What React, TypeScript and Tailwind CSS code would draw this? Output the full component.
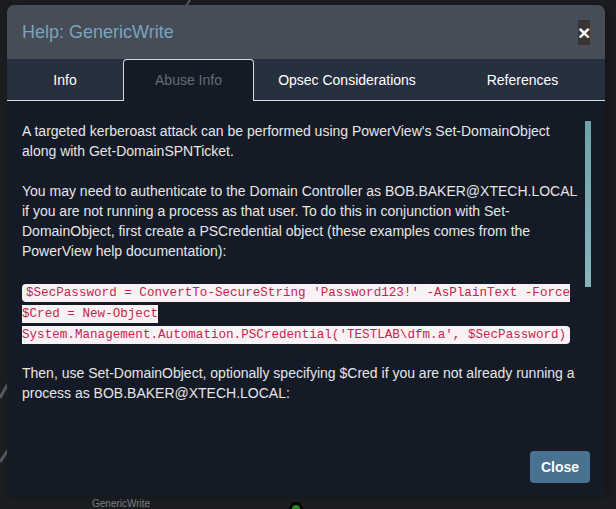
const tabs = [
  { label: "Info", width: "w-[116px]" },
  { label: "Abuse Info", width: "w-[131px]", active: true },
  { label: "Opsec Considerations", width: "w-[186px]" },
  { label: "References", width: "flex-1" },
];

function Tabs() {
  return (
    <div className="flex h-[42px] bg-[#27303f] pt-px text-[14px]">
      {tabs.map((tab) => (
        <div
          key={tab.label}
          className={
            tab.active
              ? `${tab.width} -mt-px flex items-center justify-center rounded-t-[4px] border border-b-0 border-[#d9d9d9] bg-[#151b26] text-[#666b72]`
              : `${tab.width} flex items-center justify-center border-b border-[#d9d9d9] text-white`
          }
        >
          {tab.label}
        </div>
      ))}
    </div>
  );
}

export default function App() {
  return (
    <div className="relative h-[509px] w-[616px] overflow-hidden bg-[#1b1d20] pl-[7px] pt-[5px] font-['Liberation_Sans',Arial,sans-serif]">
      <svg className="absolute left-0 top-0" width="616" height="509">
        <path d="M190 0 L186 6" stroke="#5b6066" strokeWidth="2" fill="none" />
        <path d="M0 398 Q4 390 8 384" stroke="#55595f" strokeWidth="3" fill="none" />
        <path d="M0 462 Q4 456 8 450" stroke="#55595f" strokeWidth="3" fill="none" />
      </svg>
      <span className="absolute left-[92px] top-[498px] text-[10px] leading-[12px] text-[#7b7f84]">GenericWrite</span>
      <span className="absolute left-[289px] top-[502px] h-[14px] w-[14px] rounded-full border-[3px] border-black bg-[#1f8a1f]" />

      <div className="relative flex h-[492px] w-[598px] flex-col overflow-hidden rounded-t-[7px] bg-[#151b26] shadow-[4px_0_6px_rgba(0,0,0,0.25)]">
        <div className="flex h-[54px] items-center justify-between bg-[#474d57] pl-[15px] pr-[15px]">
          <h4 className="text-[18px] text-[#79a4bf]">Help: GenericWrite</h4>
          <button className="flex h-[25px] w-[12px] items-center justify-center bg-[#3a3434] text-[21px] font-bold leading-none text-white">
            ×
          </button>
        </div>

        <Tabs />

        <div className="flex pl-[15px] pt-[20px]">
          <div className="h-[303px] w-[562px] overflow-hidden text-[14px] leading-[20px] text-[#e6e6e6]">
            <p className="mb-[20px]">
              A targeted kerberoast attack can be performed using PowerView's Set-DomainObject along with
              Get-DomainSPNTicket.
            </p>
            <p className="mb-[20px]">
              You may need to authenticate to the Domain Controller as BOB.BAKER@XTECH.LOCAL if you are not running a
              process as that user. To do this in conjunction with Set-DomainObject, first create a PSCredential object
              (these examples comes from the PowerView help documentation):
            </p>
            <p className="mb-[19px] leading-[21px]">
              <code className="rounded-[4px] bg-[#f9f2f4] px-[4px] py-[2px] font-['Liberation_Mono',monospace] text-[12.6px] leading-[14px] text-[#c7254e]">
                $SecPassword = ConvertTo-SecureString 'Password123!' -AsPlainText -Force $Cred = New-Object
                System.Management.Automation.PSCredential('TESTLAB\dfm.a', $SecPassword)
              </code>
            </p>
            <p>
              Then, use Set-DomainObject, optionally specifying $Cred if you are not already running a process as
              BOB.BAKER@XTECH.LOCAL:
            </p>
          </div>
          <div className="ml-[1px] h-[166px] w-[6px] bg-gradient-to-b from-[#6ea3aa] to-[#86b5b9]" />
        </div>

        <div className="flex justify-end pr-[15px] pt-[27px]">
          <button className="h-[32px] rounded-[4px] bg-[#48728f] px-[11px] text-[14px] font-bold text-white">
            Close
          </button>
        </div>
      </div>
    </div>
  );
}
